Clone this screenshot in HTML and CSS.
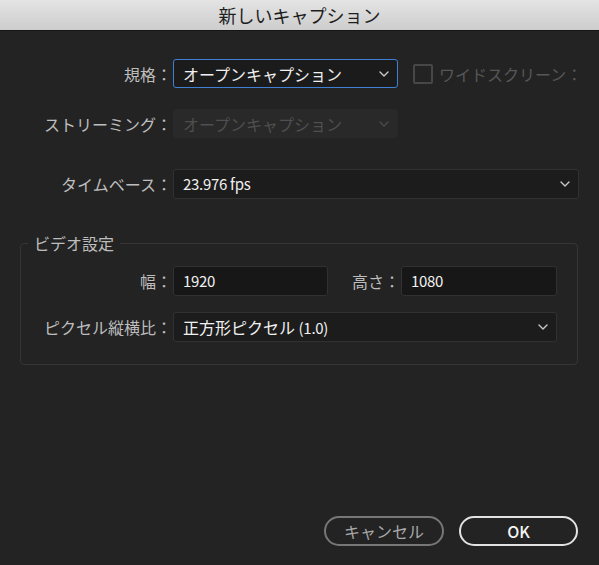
FILE: index.html
```html
<!DOCTYPE html>
<html lang="ja">
<head>
<meta charset="utf-8">
<title>新しいキャプション</title>
<link rel="stylesheet" href="styles.css">
</head>
<body>
<div class="dialog">
  <div class="titlebar">新しいキャプション</div>
  <div class="content">
    <div class="row row-std">
      <div class="label">規格：</div>
      <div class="select select-active w-std">
        <span>オープンキャプション</span>
        <svg class="chev" width="10" height="6" viewBox="0 0 10 6"><polyline points="1,1 5,5 9,1"/></svg>
      </div>
      <div class="check">
        <span class="box"></span>
        <span class="check-label">ワイドスクリーン：</span>
      </div>
    </div>
    <div class="row row-stream">
      <div class="label">ストリーミング：</div>
      <div class="select select-disabled w-std">
        <span>オープンキャプション</span>
        <svg class="chev" width="10" height="6" viewBox="0 0 10 6"><polyline points="1,1 5,5 9,1"/></svg>
      </div>
    </div>
    <div class="row row-time">
      <div class="label">タイムベース：</div>
      <div class="select w-full">
        <span class="num">23.976 fps</span>
        <svg class="chev" width="10" height="6" viewBox="0 0 10 6"><polyline points="1,1 5,5 9,1"/></svg>
      </div>
    </div>
    <fieldset class="group">
      <legend>ビデオ設定</legend>
      <div class="row row-size">
        <div class="label label-inner">幅：</div>
        <div class="field w-half"><span class="num">1920</span></div>
        <div class="label label-h">高さ：</div>
        <div class="field w-half2"><span class="num">1080</span></div>
      </div>
      <div class="row row-pixel">
        <div class="label label-inner">ピクセル縦横比：</div>
        <div class="select w-pixel">
          <span>正方形ピクセル <span class="num">(1.0)</span></span>
          <svg class="chev" width="10" height="6" viewBox="0 0 10 6"><polyline points="1,1 5,5 9,1"/></svg>
        </div>
      </div>
    </fieldset>
    <div class="buttons">
      <div class="btn btn-cancel">キャンセル</div>
      <div class="btn btn-ok">OK</div>
    </div>
  </div>
</div>
</body>
</html>
```

FILE: styles.css
```css
* { box-sizing: border-box; }
html, body {
  margin: 0;
  padding: 0;
  background: #232323;
}
body {
  font-family: "Noto Sans CJK JP", "Noto Sans", sans-serif;
  font-size: 16px;
  color: #bdbdbd;
}
.dialog {
  width: 599px;
  height: 565px;
  display: flex;
  flex-direction: column;
  background: #232323;
}
.titlebar {
  height: 31px;
  flex: none;
  background: linear-gradient(#e4e4e4, #cdcdcd);
  border-bottom: 1px solid #151515;
  color: #1e1e1e;
  font-size: 18px;
  line-height: 30px;
  text-align: center;
}
.content {
  flex: 1;
  display: flex;
  flex-direction: column;
}
.row {
  display: flex;
  align-items: center;
}
.row-std { margin-top: 28px; height: 29px; }
.row-stream { margin-top: 21px; height: 29px; }
.row-time { margin-top: 31px; height: 30px; }
.label {
  width: 173px;
  flex: none;
  text-align: right;
  padding-right: 1px;
  white-space: nowrap;
  line-height: 20px;
}
.select, .field {
  height: 100%;
  display: flex;
  align-items: center;
  justify-content: space-between;
  padding: 0 8px 0 9px;
  background: #1c1c1c;
  border: 1px solid #313131;
  border-radius: 3px;
  color: #f0f0f0;
  line-height: 20px;
  white-space: nowrap;
}
.select-active {
  border: 1.5px solid #3f7fd4;
  background: #1b1b1b;
}
.select-disabled {
  background: #292929;
  border-color: #292929;
  color: #4f4f4f;
}
.select-disabled .chev polyline { stroke: #4a4a4a; }
.chev { flex: none; }
.chev polyline {
  fill: none;
  stroke: #c8c8c8;
  stroke-width: 1.4;
  stroke-linecap: round;
  stroke-linejoin: round;
}
.num { font-size: 15px; letter-spacing: -0.3px; }
.w-std { width: 225px; }
.w-full { width: 406px; }
.check {
  display: flex;
  align-items: center;
  margin-left: 15px;
  color: #575757;
}
.box {
  width: 20px;
  height: 20px;
  border: 2px solid #474747;
  border-radius: 2px;
  margin-right: 6px;
}
.group {
  margin: 34px 21px 0 20px;
  padding: 13px 0 22px 0;
  border: 1px solid #363636;
  border-radius: 4px;
  min-width: 0;
}
.group legend {
  margin-left: 7px;
  padding: 0 6px;
  line-height: 20px;
  color: #bdbdbd;
}
.row-size { height: 30px; }
.row-pixel { height: 30px; margin-top: 16px; }
.label-inner { width: 152px; }
.w-half { width: 155px; background: #171717; }
.w-half2 { width: 156px; background: #171717; }
.field { justify-content: flex-start; }
.label-h { width: 73px; }
.w-pixel { width: 384px; }
.buttons {
  margin-top: auto;
  margin-bottom: 19px;
  display: flex;
  justify-content: flex-end;
  gap: 15px;
  padding-right: 21px;
}
.btn {
  height: 30px;
  border-radius: 15px;
  border: 2px solid #777;
  display: flex;
  align-items: center;
  justify-content: center;
  line-height: 20px;
}
.btn-cancel {
  width: 120px;
  color: #a9a9a9;
}
.btn-ok {
  width: 119px;
  border-color: #e2e2e2;
  color: #f4f4f4;
  font-weight: 500;
  font-size: 16px;
}
```
